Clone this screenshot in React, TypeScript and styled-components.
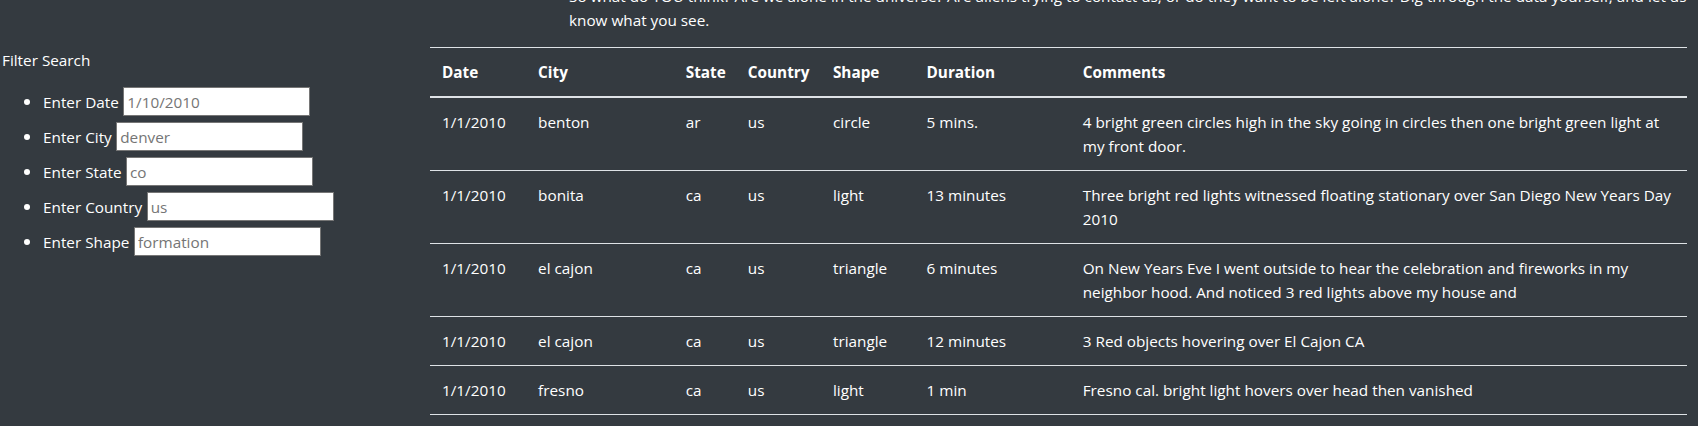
import React from "react";
import styled, { createGlobalStyle } from "styled-components";

const GlobalStyle = createGlobalStyle`
  html, body {
    margin: 0;
    padding: 0;
    overflow: hidden;
    background: #343a40;
  }
  body {
    color: #ffffff;
    font-family: "Open Sans", "Noto Sans", sans-serif;
    font-size: 15.3px;
    line-height: 24px;
  }
`;

const Page = styled.div`
  display: flex;
  align-items: flex-start;
  width: 1698px;
  height: 426px;
  overflow: hidden;
`;

const Sidebar = styled.aside`
  flex: 0 0 430px;
  box-sizing: border-box;
  padding: 47.5px 0 0 2px;
`;

const SidebarTitle = styled.div`
  line-height: 24px;
`;

const FilterList = styled.ul`
  list-style: none;
  margin: 12.5px 0 0;
  padding: 0 0 0 40px;
`;

const FilterItem = styled.li`
  display: flex;
  align-items: center;
  height: 35px;

  &::before {
    content: "";
    flex: 0 0 6px;
    height: 6px;
    margin: 1px 13px 0 -18px;
    border-radius: 50%;
    background: #ffffff;
  }
`;

const FilterLabel = styled.label`
  margin-right: 4.5px;
  white-space: nowrap;
`;

const FilterInput = styled.input`
  box-sizing: border-box;
  width: 187px;
  height: 29px;
  padding: 1px 3px;
  border: 1px solid #767676;
  border-radius: 0;
  background: #ffffff;
  color: #212529;
  font-family: inherit;
  font-size: 15.3px;
  line-height: 24px;
  outline: none;

  &::placeholder {
    color: #757575;
    opacity: 1;
  }
`;

const Main = styled.main`
  flex: 1 1 auto;
  box-sizing: border-box;
  padding-right: 13px;
  margin-top: -16px;
`;

const Intro = styled.p`
  margin: 0 0 15px 139px;
  white-space: nowrap;
  line-height: 24px;
`;

const Table = styled.table`
  width: 100%;
  border-collapse: collapse;
  table-layout: fixed;
  color: #ffffff;
`;

const HeadCell = styled.th`
  padding: 12px;
  text-align: left;
  vertical-align: bottom;
  font-weight: 700;
  line-height: 24px;
  border-top: 1px solid #dee2e6;
  border-bottom: 2px solid #dee2e6;
  white-space: nowrap;
`;

const BodyRow = styled.tr`
  &:last-child td {
    border-bottom: 1px solid #dee2e6;
  }
`;

const Cell = styled.td`
  padding: 12px;
  vertical-align: top;
  line-height: 24px;
  border-top: 1px solid #dee2e6;
`;

const filters = [
  { label: "Enter Date", placeholder: "1/10/2010", id: "datetime" },
  { label: "Enter City", placeholder: "denver", id: "city" },
  { label: "Enter State", placeholder: "co", id: "state" },
  { label: "Enter Country", placeholder: "us", id: "country" },
  { label: "Enter Shape", placeholder: "formation", id: "shape" },
];

const columns = [
  { title: "Date", width: 96 },
  { title: "City", width: 147.5 },
  { title: "State", width: 62 },
  { title: "Country", width: 85 },
  { title: "Shape", width: 93.5 },
  { title: "Duration", width: 156 },
  { title: "Comments", width: 615 },
];

const rows = [
  ["1/1/2010", "benton", "ar", "us", "circle", "5 mins.", "4 bright green circles high in the sky going in circles then one bright green light at my front door."],
  ["1/1/2010", "bonita", "ca", "us", "light", "13 minutes", "Three bright red lights witnessed floating stationary over San Diego New Years Day 2010"],
  ["1/1/2010", "el cajon", "ca", "us", "triangle", "6 minutes", "On New Years Eve I went outside to hear the celebration and fireworks in my neighbor hood. And noticed 3 red lights above my house and"],
  ["1/1/2010", "el cajon", "ca", "us", "triangle", "12 minutes", "3 Red objects hovering over El Cajon CA"],
  ["1/1/2010", "fresno", "ca", "us", "light", "1 min", "Fresno cal. bright light hovers over head then vanished"],
];

export default function App() {
  return (
    <>
      <GlobalStyle />
      <Page>
        <Sidebar>
          <SidebarTitle>Filter Search</SidebarTitle>
          <FilterList>
            {filters.map((f) => (
              <FilterItem key={f.id}>
                <FilterLabel htmlFor={f.id}>{f.label}</FilterLabel>
                <FilterInput id={f.id} type="text" placeholder={f.placeholder} />
              </FilterItem>
            ))}
          </FilterList>
        </Sidebar>
        <Main>
          <Intro>
            So what do YOU think? Are we alone in the universe? Are aliens trying to contact us, or do they want to be left alone? Dig through the data yourself, and let us
            <br />
            know what you see.
          </Intro>
          <Table>
            <colgroup>
              {columns.map((c) => (
                <col key={c.title} style={{ width: c.width }} />
              ))}
            </colgroup>
            <thead>
              <tr>
                {columns.map((c) => (
                  <HeadCell key={c.title}>{c.title}</HeadCell>
                ))}
              </tr>
            </thead>
            <tbody>
              {rows.map((r, i) => (
                <BodyRow key={i}>
                  {r.map((v, j) => (
                    <Cell key={j}>{v}</Cell>
                  ))}
                </BodyRow>
              ))}
            </tbody>
          </Table>
        </Main>
      </Page>
    </>
  );
}
